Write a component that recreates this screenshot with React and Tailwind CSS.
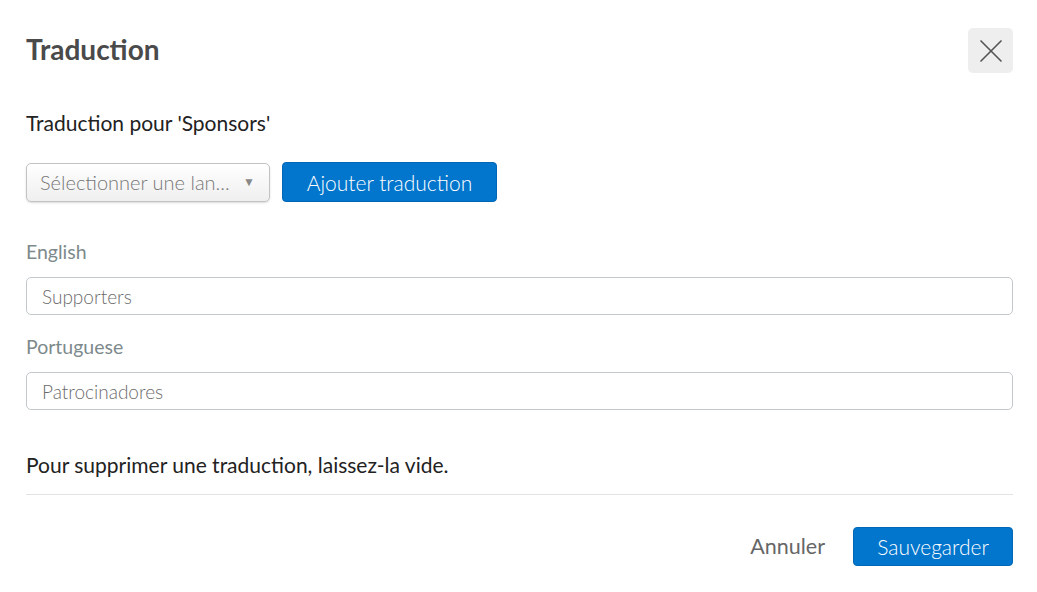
import { X } from "lucide-react"

function TranslationField({ label, value }) {
    return (
        <div className="flex flex-col">
            <label className="text-[19.5px] leading-[24px] text-[#7d8a8c] mb-[13px]">{label}</label>
            <input
                type="text"
                defaultValue={value}
                className="h-[38px] w-full rounded-[5px] border border-[#c3c8cc] px-[15px] text-[19px] font-light text-[#6b6b6b] outline-none"
            />
        </div>
    )
}

export default function App() {
    return (
        <div className="w-[1037px] h-[592px] bg-white px-[24px] pl-[26px] text-[#222]" style={{ fontFamily: "Lato, 'Open Sans', sans-serif" }}>
            <div className="flex items-center justify-between pt-[28px]">
                <h1 className="text-[28px] font-bold text-[#4a4a4a] leading-[32px] -mt-[4px]">Traduction</h1>
                <button className="w-[45px] h-[45px] rounded-[5px] bg-[#eeeeee] flex items-center justify-center text-[#555]">
                    <X size={40} strokeWidth={1} />
                </button>
            </div>

            <p className="mt-[38px] text-[21px] leading-[24px] text-[#222]">Traduction pour 'Sponsors'</p>

            <div className="flex items-center gap-[12px] mt-[27px]">
                <div className="w-[244px] h-[39px] rounded-[5px] border border-[#c3c3c3] bg-gradient-to-b from-white to-[#efefef] shadow-[0_1px_2px_rgba(0,0,0,0.15)] flex items-center justify-between pl-[13px] pr-[14px]">
                    <span className="text-[20px] font-light text-[#777]">Sélectionner une lan...</span>
                    <span className="text-[12px] text-[#888]">▼</span>
                </div>
                <button className="w-[215px] h-[40px] rounded-[4px] bg-[#0275cc] border border-[#0268b6] text-white text-[21px] font-light leading-none">
                    Ajouter traduction
                </button>
            </div>

            <div className="mt-[38px] flex flex-col gap-[20px]">
                <TranslationField label="English" value="Supporters" />
                <TranslationField label="Portuguese" value="Patrocinadores" />
            </div>

            <p className="mt-[43px] text-[21px] leading-[24px] text-[#222]">Pour supprimer une traduction, laissez-la vide.</p>

            <div className="mt-[17px] border-t border-[#e3e3e3]"></div>

            <div className="flex justify-end items-center gap-[28px] mt-[32px]">
                <button className="text-[21.5px] text-[#666] font-normal">Annuler</button>
                <button className="w-[160px] h-[39px] rounded-[4px] bg-[#0275cc] border border-[#0268b6] text-white text-[21px] font-light leading-none">
                    Sauvegarder
                </button>
            </div>
        </div>
    )
}
